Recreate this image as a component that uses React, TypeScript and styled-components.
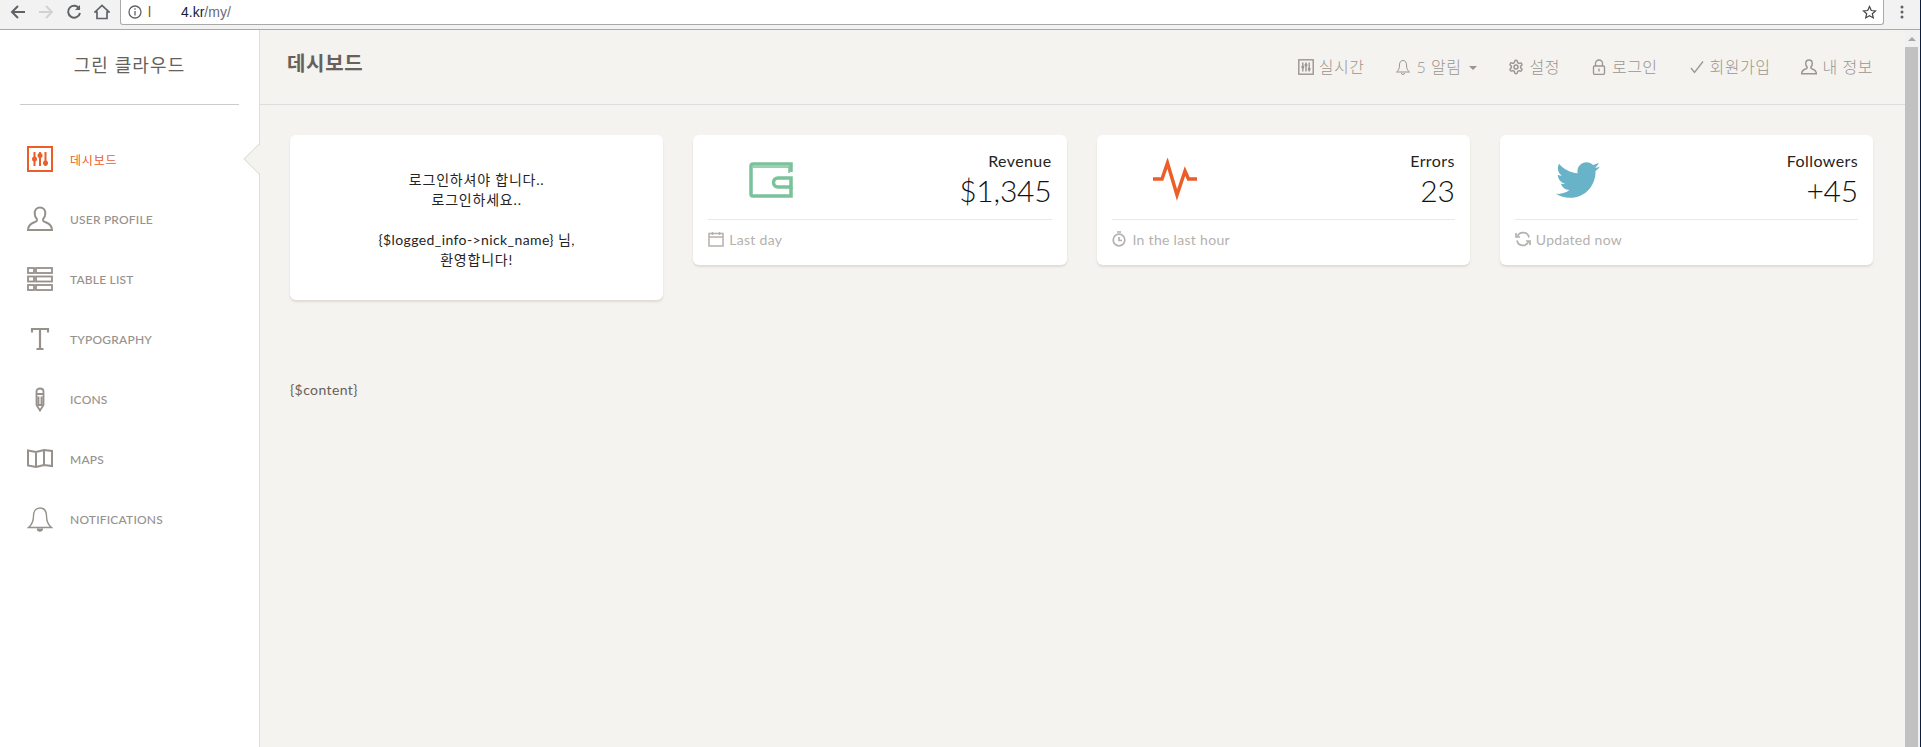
import React from 'react';
import styled, { createGlobalStyle } from 'styled-components';
import { FaTwitter } from 'react-icons/fa';

const Global = createGlobalStyle`
  html, body { margin: 0; padding: 0; height: 100%; overflow: hidden; }
  body { font-family: "Lato", "Noto Sans CJK KR", sans-serif; background: #fff; color: #66615b; }
  #root { height: 100%; }
`;

const Page = styled.div`
  display: flex; flex-direction: column; height: 747px; width: 1921px; overflow: hidden;
  box-sizing: border-box; border-right: 1px solid #0b1d3a;
`;

const Chrome = styled.header`
  height: 30px; flex: none; box-sizing: border-box; background: #f2f2f2; border-bottom: 1px solid #a9a9a9;
  display: flex; align-items: flex-start;
`;
const ChromeNav = styled.div`width: 120px; height: 24px; flex: none; display: flex; align-items: center; padding-left: 10px; box-sizing: border-box; gap: 12px;`;
const NavGlyph = styled.svg`flex: none; display: block;`;
const Omnibox = styled.div`
  flex: none; width: 1764px; height: 25px; box-sizing: border-box; background: #fff;
  border: 1px solid #a9a9a9; border-top: 0; border-bottom-left-radius: 3px; border-bottom-right-radius: 3px;
  display: flex; align-items: center; padding: 0 6px 0 7px; font: 14px "Liberation Sans", sans-serif;
`;
const UrlStart = styled.span`color: #a04a10; margin-left: 6px; width: 33px; flex: none;`;
const UrlHost = styled.span`color: #1a1a40;`;
const UrlPath = styled.span`color: #6a6a78; flex: 1;`;
const ChromeMenu = styled.div`flex: 1; height: 24px; display: flex; align-items: center; padding-left: 16px;`;

const Body = styled.div`flex: 1; display: flex; min-height: 0;`;

const Sidebar = styled.aside`
  width: 260px; flex: none; box-sizing: border-box; background: #fff; border-right: 1px solid #ddd; position: relative;
`;
const Logo = styled.div`
  margin: 0 20px; height: 75px; box-sizing: border-box; border-bottom: 1px solid #ccc; text-align: center;
  font-size: 18px; line-height: 20px; padding-top: 25px; color: #66615b; font-weight: 400; letter-spacing: 1.1px;
`;
const Menu = styled.nav`padding-top: 24px; display: flex; flex-direction: column;`;
const MenuItem = styled.div<{ $active?: boolean }>`
  height: 60px; display: flex; align-items: center; padding-left: 27px; box-sizing: border-box;
  color: ${p => (p.$active ? '#eb5e28' : '#96918b')};
`;
const MenuIcon = styled.svg`width: 26px; height: 26px; flex: none; margin-right: 17px; display: block;`;
const MenuLabel = styled.span<{ $ko?: boolean }>`
  font-size: 12px; font-weight: ${p => (p.$ko ? 400 : 500)}; text-transform: uppercase;
  letter-spacing: ${p => (p.$ko ? '.8px' : '.2px')};
`;
const Notch = styled.div`
  position: absolute; right: -1px; top: 113px; width: 17px; height: 33px; overflow: hidden;
  &::after {
    content: ''; position: absolute; left: 5px; top: 5px; width: 22px; height: 22px; background: #f4f3ef;
    border: 1px solid #ddd; box-sizing: border-box; transform: rotate(45deg);
  }
`;

const Main = styled.main`flex: 1; min-width: 0; background: #f4f3ef; display: flex; flex-direction: column;`;
const TopBar = styled.div`
  height: 75px; flex: none; box-sizing: border-box; border-bottom: 1px solid #ddd; display: flex;
  justify-content: space-between; align-items: center; padding: 0 32px 0 27px;
`;
const PageTitle = styled.h1`margin: 0 0 8px; font-size: 20px; font-weight: 700; color: #66615b; line-height: 20px; letter-spacing: .7px;`;
const TopNav = styled.nav`display: flex; align-items: center; gap: 31px; color: #9a9590; font-size: 16px; font-weight: 300; letter-spacing: .5px;`;
const TopItem = styled.div`display: flex; align-items: center; gap: 5px; white-space: nowrap; line-height: 20px;`;
const Caret = styled.span`
  display: inline-block; margin-left: 3px; margin-top: 2px; border-top: 4px solid #9a9590;
  border-left: 4px solid transparent; border-right: 4px solid transparent;
`;
const TopIcon = styled.svg`width: 16px; height: 16px; display: block; flex: none;`;

const Content = styled.div`padding: 30px 0 0 30px; margin-right: 32px;`;
const Cards = styled.div`display: grid; grid-template-columns: repeat(4, 1fr); gap: 30px; align-items: start;`;
const Card = styled.section`
  background: #fff; border-radius: 6px; box-shadow: 0 2px 2px rgba(204,197,185,.5); box-sizing: border-box;
`;
const NoticeCard = styled(Card)`
  height: 165px; padding-top: 35px; text-align: center; font-size: 14px; line-height: 20px; color: #252422;
`;
const NoticeLine = styled.div<{ $latin?: boolean }>`letter-spacing: ${p => (p.$latin ? '.4px' : '.8px')};`;
const Gap = styled.div`height: 20px;`;
const StatCard = styled(Card)`height: 130px; padding: 15px 15px 0; display: flex; flex-direction: column;`;
const StatTop = styled.div`height: 70px; flex: none; box-sizing: border-box; display: flex; justify-content: space-between; border-bottom: 1px solid #eee8e2;`;
const StatIconBox = styled.div<{ $color: string }>`
  width: 126px; height: 60px; display: flex; align-items: center; justify-content: center; color: ${p => p.$color}; flex: none;
`;
const StatText = styled.div`text-align: right; color: #252422;`;
const StatName = styled.div`font-size: 16px; line-height: 16px; padding-top: 3px; letter-spacing: .4px;`;
const StatValue = styled.div`font-size: 30px; font-weight: 300; line-height: 36px; margin-top: 3px; color: #111; letter-spacing: -.2px;`;
const StatFoot = styled.div`display: flex; align-items: center; gap: 5px; height: 38px; color: #b5b1ac; font-size: 14px; font-weight: 400; letter-spacing: .3px;`;
const FootIcon = styled.svg`width: 16px; height: 16px; flex: none; display: block;`;
const ContentLine = styled.p`margin: 80px 0 0; font-size: 14px; line-height: 20px; color: #66615b; letter-spacing: .4px;`;

const Scrollbar = styled.div`width: 15px; flex: none; background: #f1f1f1; display: flex; flex-direction: column;`;
const ScrollUp = styled.div`height: 17px; flex: none; position: relative;
  &::after { content: ''; position: absolute; left: 3px; top: 7px; border-left: 4px solid transparent; border-right: 4px solid transparent; border-bottom: 4px solid #a8a8a8; }
`;
const ScrollThumb = styled.div`flex: 1; background: #c1c1c1; margin-right: 2px;`;

const S = { fill: 'none', stroke: 'currentColor' } as const;

export default function App() {
  return (
    <Page>
      <Global />
      <Chrome>
        <ChromeNav>
          <NavGlyph width="16" height="16" viewBox="0 0 16 16" {...S} stroke="#5f6368" strokeWidth="2"><path d="M15 8H2M8 2L2 8l6 6" /></NavGlyph>
          <NavGlyph width="16" height="16" viewBox="0 0 16 16" {...S} stroke="#d2d2d2" strokeWidth="2"><path d="M1 8h13M8 2l6 6-6 6" /></NavGlyph>
          <NavGlyph width="16" height="16" viewBox="0 0 16 16" {...S} stroke="#5f6368" strokeWidth="2"><path d="M13.500 5A6 6 0 1 0 14 9" /><path d="M14 1v5H9" fill="#5f6368" stroke="none" /></NavGlyph>
          <NavGlyph width="16" height="16" viewBox="0 0 16 16" {...S} stroke="#5f6368" strokeWidth="1.700"><path d="M1 8l7-6.500L15 8h-2v6.500H3V8z" /></NavGlyph>
        </ChromeNav>
        <Omnibox>
          <NavGlyph width="14" height="14" viewBox="0 0 14 14" {...S} stroke="#5f6368" strokeWidth="1.300"><circle cx="7" cy="7" r="6" /><path d="M7 6v4.500M7 3.200v1.600" /></NavGlyph>
          <UrlStart>l</UrlStart>
          <UrlHost>4.kr</UrlHost>
          <UrlPath>/my/</UrlPath>
          <NavGlyph width="15" height="15" viewBox="0 0 15 15" {...S} stroke="#444" strokeWidth="1.200"><path d="M7.500 1.500l1.800 4 4.200.4-3.200 2.800 1 4.200-3.800-2.200-3.800 2.200 1-4.200L1.500 5.900l4.200-.4z" /></NavGlyph>
        </Omnibox>
        <ChromeMenu>
          <NavGlyph width="4" height="14" viewBox="0 0 4 14" fill="#5f6368"><circle cx="2" cy="2" r="1.500" /><circle cx="2" cy="7" r="1.500" /><circle cx="2" cy="12" r="1.500" /></NavGlyph>
        </ChromeMenu>
      </Chrome>
      <Body>
        <Sidebar>
          <Logo>그린 클라우드</Logo>
          <Menu>
            <MenuItem $active>
              <MenuIcon viewBox="0 0 26 26" {...S} strokeWidth="2"><rect x="1" y="1" width="24" height="24" /><path d="M7.500 6v14M13 6v14M18.500 6v14" /><g fill="currentColor" stroke="none"><circle cx="7.500" cy="13" r="2.500" /><circle cx="13" cy="9.500" r="2.500" /><circle cx="18.500" cy="17" r="2.500" /></g></MenuIcon>
              <MenuLabel $ko>데시보드</MenuLabel>
            </MenuItem>
            <MenuItem>
              <MenuIcon viewBox="0 0 26 26" {...S} strokeWidth="2"><path d="M13 1.500c-3.300 0-5.300 2.700-5.300 5.800 0 2.400.9 4.200 1.900 5.400.6.800.4 2.300-.7 2.900-2.600 1.300-7.900 1.900-7.900 8.400h24c0-6.500-5.300-7.100-7.900-8.400-1.100-.6-1.300-2.100-.7-2.900 1-1.200 1.900-3 1.900-5.400 0-3.100-2-5.800-5.300-5.800z" /></MenuIcon>
              <MenuLabel>User Profile</MenuLabel>
            </MenuItem>
            <MenuItem>
              <MenuIcon viewBox="0 0 26 26" {...S} strokeWidth="1.800"><rect x="1" y="2" width="6" height="5" /><rect x="9" y="2" width="16" height="5" /><rect x="1" y="10.500" width="6" height="5" /><rect x="9" y="10.500" width="16" height="5" /><rect x="1" y="19" width="6" height="5" /><rect x="9" y="19" width="16" height="5" /></MenuIcon>
              <MenuLabel>Table List</MenuLabel>
            </MenuItem>
            <MenuItem>
              <MenuIcon viewBox="0 0 26 26" {...S} strokeWidth="2.200"><path d="M5 6.500V3h16v3.500M13 3v20M9.500 23h7" /></MenuIcon>
              <MenuLabel>Typography</MenuLabel>
            </MenuItem>
            <MenuItem>
              <MenuIcon viewBox="0 0 26 26" {...S} strokeWidth="1.800"><path d="M9.500 5.500c0-4 7-4 7 0V19l-3.500 5.500L9.500 19zM9.500 8h7M11.500 10.500V19h3v-8.500" /></MenuIcon>
              <MenuLabel>Icons</MenuLabel>
            </MenuItem>
            <MenuItem>
              <MenuIcon viewBox="0 0 26 26" {...S} strokeWidth="2"><path d="M1 4.500l8 1.500 8-2 8 1v15l-8-1-8 2-8-1.500zM9 6v15.500M17 4v15.500" /></MenuIcon>
              <MenuLabel>Maps</MenuLabel>
            </MenuItem>
            <MenuItem>
              <MenuIcon viewBox="0 0 26 26" {...S} strokeWidth="1.400"><path d="M13 2c-4.500 0-6.500 3.500-6.500 8 0 6-2 9-5 11.500h23c-3-2.500-5-5.500-5-11.500 0-4.500-2-8-6.500-8z" /><path d="M10.500 22.500a2.500 2.500 0 0 0 5 0" fill="currentColor" /></MenuIcon>
              <MenuLabel>Notifications</MenuLabel>
            </MenuItem>
          </Menu>
          <Notch />
        </Sidebar>
        <Main>
          <TopBar>
            <PageTitle>데시보드</PageTitle>
            <TopNav>
              <TopItem>
                <TopIcon viewBox="0 0 16 16" {...S} strokeWidth="1.400"><rect x=".8" y=".8" width="14.400" height="14.400" /><path d="M4.800 3.500v9M8 3.500v9M11.200 3.500v9" /><g fill="currentColor" stroke="none"><circle cx="4.800" cy="8" r="1.500" /><circle cx="8" cy="6" r="1.500" /><circle cx="11.200" cy="10" r="1.500" /></g></TopIcon>
                실시간
              </TopItem>
              <TopItem>
                <TopIcon viewBox="0 0 16 16" {...S} strokeWidth="1"><path d="M8 1.500C5.500 1.500 4.500 3.500 4.500 6c0 3.500-1 5.500-3 7h13c-2-1.500-3-3.500-3-7 0-2.500-1-4.500-3.500-4.500zM6.500 14a1.500 1.500 0 0 0 3 0" /></TopIcon>
                5 알림<Caret />
              </TopItem>
              <TopItem>
                <TopIcon viewBox="0 0 24 24" {...S} strokeWidth="2.200"><path d="M12.200 2h-.4a2 2 0 0 0-2 2v.2a2 2 0 0 1-1 1.700l-.4.300a2 2 0 0 1-2 0l-.2-.1a2 2 0 0 0-2.700.7l-.2.400a2 2 0 0 0 .7 2.700l.2.100a2 2 0 0 1 1 1.700v.5a2 2 0 0 1-1 1.700l-.2.100a2 2 0 0 0-.7 2.700l.2.400a2 2 0 0 0 2.700.7l.2-.1a2 2 0 0 1 2 0l.4.300a2 2 0 0 1 1 1.700V20a2 2 0 0 0 2 2h.4a2 2 0 0 0 2-2v-.2a2 2 0 0 1 1-1.700l.4-.3a2 2 0 0 1 2 0l.2.100a2 2 0 0 0 2.700-.7l.2-.4a2 2 0 0 0-.7-2.700l-.2-.1a2 2 0 0 1-1-1.700v-.5a2 2 0 0 1 1-1.700l.2-.1a2 2 0 0 0 .7-2.700l-.2-.4a2 2 0 0 0-2.700-.7l-.2.1a2 2 0 0 1-2 0l-.4-.3a2 2 0 0 1-1-1.700V4a2 2 0 0 0-2-2z" /><circle cx="12" cy="12" r="3" /></TopIcon>
                설정
              </TopItem>
              <TopItem>
                <TopIcon viewBox="0 0 16 16" {...S} strokeWidth="1.300"><rect x="2.500" y="7" width="11" height="8.300" rx="1" /><path d="M4.500 7V4.500a3.500 3.500 0 0 1 7 0V7M8 9.500v3" /></TopIcon>
                로그인
              </TopItem>
              <TopItem>
                <TopIcon viewBox="0 0 16 16" {...S} strokeWidth="1.300"><path d="M2 9l3.500 4.500L14 2.500" /></TopIcon>
                회원가입
              </TopItem>
              <TopItem>
                <TopIcon viewBox="0 0 26 26" {...S} strokeWidth="2.400"><path d="M13 1.500c-3.300 0-5.300 2.700-5.300 5.800 0 2.400.9 4.200 1.900 5.400.6.800.4 2.300-.7 2.900-2.600 1.300-7.900 1.900-7.900 8.400h24c0-6.500-5.300-7.100-7.900-8.400-1.100-.6-1.300-2.100-.7-2.900 1-1.200 1.900-3 1.900-5.400 0-3.100-2-5.800-5.300-5.800z" /></TopIcon>
                내 정보
              </TopItem>
            </TopNav>
          </TopBar>
          <Content>
            <Cards>
              <NoticeCard>
                <NoticeLine>로그인하셔야 합니다..</NoticeLine>
                <NoticeLine>로그인하세요..</NoticeLine>
                <Gap />
                <NoticeLine $latin>{'{$logged_info->nick_name}'} 님,</NoticeLine>
                <NoticeLine>환영합니다!</NoticeLine>
              </NoticeCard>
              <StatCard>
                <StatTop>
                  <StatIconBox $color="#7ac29a">
                    <svg width="44" height="36" viewBox="0 0 44 36" {...S} strokeWidth="3.500"><path d="M42 10V2H4A2 2 0 0 0 2 4v28a2 2 0 0 0 2 2h38v-9" /><path d="M4 5h36v6" strokeWidth="1.500" /><path d="M42 16H29a4.500 4.500 0 0 0 0 9h13v-9z" /></svg>
                  </StatIconBox>
                  <StatText><StatName>Revenue</StatName><StatValue>$1,345</StatValue></StatText>
                </StatTop>
                <StatFoot>
                  <FootIcon viewBox="0 0 16 16" {...S} strokeWidth="1.500"><rect x="1" y="2.500" width="14" height="12.500" /><path d="M1 6h14M4.500 1v3M11.500 1v3" /></FootIcon>
                  Last day
                </StatFoot>
              </StatCard>
              <StatCard>
                <StatTop>
                  <StatIconBox $color="#eb5e28">
                    <svg width="44" height="44" viewBox="0 0 44 44" {...S} strokeWidth="3.500"><path d="M0 21h9l5.500-16L24 37l8-24 3.500 8H44" /></svg>
                  </StatIconBox>
                  <StatText><StatName>Errors</StatName><StatValue>23</StatValue></StatText>
                </StatTop>
                <StatFoot>
                  <FootIcon viewBox="0 0 16 16" {...S} strokeWidth="1.700"><circle cx="7" cy="9" r="5.800" /><path d="M7 6v3.500H10M5 1h4" /></FootIcon>
                  In the last hour
                </StatFoot>
              </StatCard>
              <StatCard>
                <StatTop>
                  <StatIconBox $color="#68b3c8"><FaTwitter size={44} /></StatIconBox>
                  <StatText><StatName>Followers</StatName><StatValue>+45</StatValue></StatText>
                </StatTop>
                <StatFoot>
                  <FootIcon viewBox="0 0 16 16" {...S} strokeWidth="1.700"><path d="M2.500 5.500A6 6 0 0 1 14 6.500M13.500 10.500A6 6 0 0 1 2 9.500" /><path d="M1 2v4h4M15 14v-4h-4" /></FootIcon>
                  Updated now
                </StatFoot>
              </StatCard>
            </Cards>
            <ContentLine>{'{$content}'}</ContentLine>
          </Content>
        </Main>
        <Scrollbar>
          <ScrollUp />
          <ScrollThumb />
        </Scrollbar>
      </Body>
    </Page>
  );
}
